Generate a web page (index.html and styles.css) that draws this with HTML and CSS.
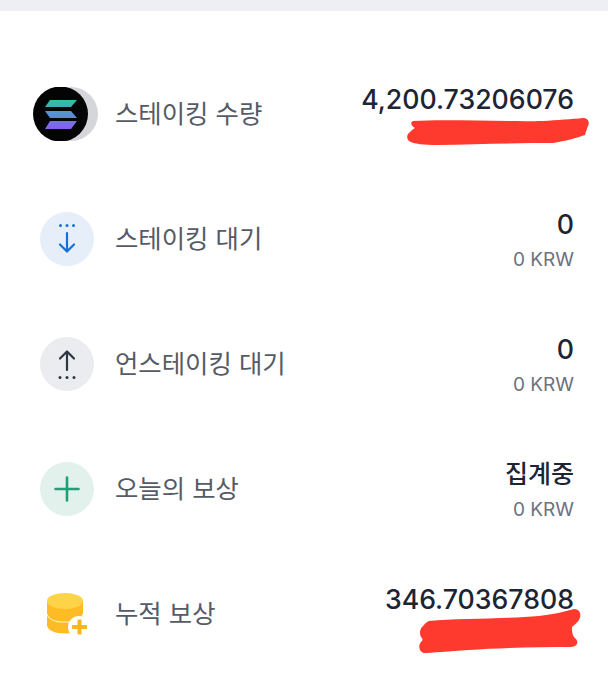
FILE: index.html
```html
<!DOCTYPE html>
<html lang="ko">
<head>
  <meta charset="UTF-8">
  <title>스테이킹</title>
  <link rel="stylesheet" href="styles.css">
</head>
<body>
  <div class="topbar"></div>
  <div class="list">
    <div class="row">
      <div class="icon">
        <svg class="sol" width="66" height="54" viewBox="0 0 66 54">
          <defs>
            <linearGradient id="solgrad" gradientUnits="userSpaceOnUse" x1="0" y1="13" x2="0" y2="42">
              <stop offset="0" stop-color="#2cc5a0"/>
              <stop offset="0.5" stop-color="#5a8fd0"/>
              <stop offset="1" stop-color="#8a5cf0"/>
            </linearGradient>
          </defs>
          <circle cx="38" cy="27" r="27" fill="#d5d6da"/>
          <circle cx="27.500" cy="27" r="27.500" fill="#040405"/>
          <g fill="url(#solgrad)">
            <path d="M17 13H44L38 20H12Z"/>
            <path d="M12 24H38L44 31H17Z"/>
            <path d="M17 34H44L38 42H12Z"/>
          </g>
        </svg>
      </div>
      <div class="label">스테이킹 수량</div>
      <div class="values">
        <div class="num">4,200.73206076</div>
        <div class="sub">
          <svg class="scribble scribble-a" width="182" height="28" viewBox="0 0 182 28">
            <path fill="#fe3a2e" d="M6 3C40 1 100 4 136 3C150 2 165 1 176 0C181 0 183 4 181 8C180 11 179 13 178 17C170 20 158 23 146 25C110 25 70 26 30 27C18 27 6 26 2 23C-1 20 0 16 3 14C5 12 6 11 8 10C4 8 3 4 6 3Z"/>
          </svg>
        </div>
      </div>
    </div>

    <div class="row">
      <div class="icon circle blue">
        <svg width="30" height="34" viewBox="0 0 30 34" fill="none" stroke="#1a6fd6" stroke-width="2.200" stroke-linecap="round" stroke-linejoin="round">
          <path d="M15 11V29M8 22.500L15 29.500L22 22.500"/>
          <g fill="#1a6fd6" stroke="none"><circle cx="8.500" cy="3.500" r="1.500"/><circle cx="15" cy="3.500" r="1.500"/><circle cx="21.500" cy="3.500" r="1.500"/></g>
        </svg>
      </div>
      <div class="label">스테이킹 대기</div>
      <div class="values">
        <div class="num">0</div>
        <div class="sub">0 KRW</div>
      </div>
    </div>

    <div class="row">
      <div class="icon circle gray">
        <svg width="30" height="34" viewBox="0 0 30 34" fill="none" stroke="#2c3644" stroke-width="2.200" stroke-linecap="round" stroke-linejoin="round">
          <path d="M15 23V5M8 11.500L15 4.500L22 11.500"/>
          <g fill="#2c3644" stroke="none"><circle cx="8" cy="30.500" r="1.500"/><circle cx="15" cy="30.500" r="1.500"/><circle cx="22" cy="30.500" r="1.500"/></g>
        </svg>
      </div>
      <div class="label">언스테이킹 대기</div>
      <div class="values">
        <div class="num">0</div>
        <div class="sub">0 KRW</div>
      </div>
    </div>

    <div class="row">
      <div class="icon circle green">
        <svg width="26" height="26" viewBox="0 0 26 26" fill="none" stroke="#1f9f78" stroke-width="2.600" stroke-linecap="round">
          <path d="M13 1.500V24.500M1.500 13H24.500"/>
        </svg>
      </div>
      <div class="label">오늘의 보상</div>
      <div class="values">
        <div class="num kr">집계중</div>
        <div class="sub">0 KRW</div>
      </div>
    </div>

    <div class="row">
      <div class="icon">
        <svg width="54" height="54" viewBox="0 0 54 54">
          <path fill="#fdbb25" d="M7 14V38C7 43 15 46.500 25 46.500C35 46.500 43 43 43 38V14Z"/>
          <path fill="none" stroke="#fff3cf" stroke-width="1.200" d="M7 27C8 32 15 35 25 35C35 35 42 32 43 27"/>
          <ellipse cx="25" cy="14" rx="18" ry="8" fill="#fdd347"/>
          <circle cx="39" cy="40" r="11" fill="#fff"/>
          <path fill="none" stroke="#f9b522" stroke-width="4" d="M39.500 32.500V47.500M32 40H47"/>
        </svg>
      </div>
      <div class="label">누적 보상</div>
      <div class="values">
        <div class="num">346.70367808</div>
        <div class="sub">
          <svg class="scribble scribble-b" width="162" height="44" viewBox="0 0 162 44">
            <path fill="#fe3a2e" d="M10 12C40 9 90 10 120 7C135 5 145 3 155 0C161 0 163 6 160 11C158 14 155 16 153 18C153 22 153 27 157 30C160 34 158 37 152 38C120 38 80 39 50 41C30 42 12 44 5 44C0 43-1 36 2 33C4 31 4 30 2 28C0 24 1 19 5 16C6 14 8 13 10 12Z"/>
          </svg>
        </div>
      </div>
    </div>
  </div>
</body>
</html>
```

FILE: styles.css
```css
body {
  margin: 0;
  background: #fff;
  font-family: "Noto Sans CJK KR", "Liberation Sans", sans-serif;
}
.topbar {
  height: 11px;
  background: #eeeff4;
}
.list {
  padding: 40px 34px 0 40px;
}
.row {
  display: flex;
  align-items: center;
  height: 125px;
}
.icon {
  position: relative;
  flex: none;
  width: 54px;
  height: 54px;
  display: flex;
  align-items: center;
  justify-content: center;
}
.circle {
  border-radius: 50%;
}
.blue {
  background: #e5eef9;
}
.gray {
  background: #ebecef;
}
.green {
  background: #e2f1ec;
}
.sol {
  position: absolute;
  left: -7px;
  top: 0;
}
.label {
  margin-left: 21px;
  margin-bottom: 3px;
  font-size: 25.4px;
  color: #555b66;
}
.values {
  margin-left: auto;
  padding-top: 2px;
  text-align: right;
}
.num {
  font-family: Inter, "Noto Sans CJK KR", sans-serif;
  font-size: 26.7px;
  font-weight: 500;
  line-height: 32px;
  color: #1d2534;
}
.num.kr {
  font-size: 25px;
}
.sub {
  position: relative;
  margin-top: 8px;
  height: 24px;
  font-family: Inter, "Liberation Sans", sans-serif;
  font-size: 19px;
  line-height: 24px;
  color: #6b7280;
}
.scribble {
  position: absolute;
  right: -15px;
  top: -5px;
}
.scribble-b {
  right: -7px;
  top: -14px;
}
```
